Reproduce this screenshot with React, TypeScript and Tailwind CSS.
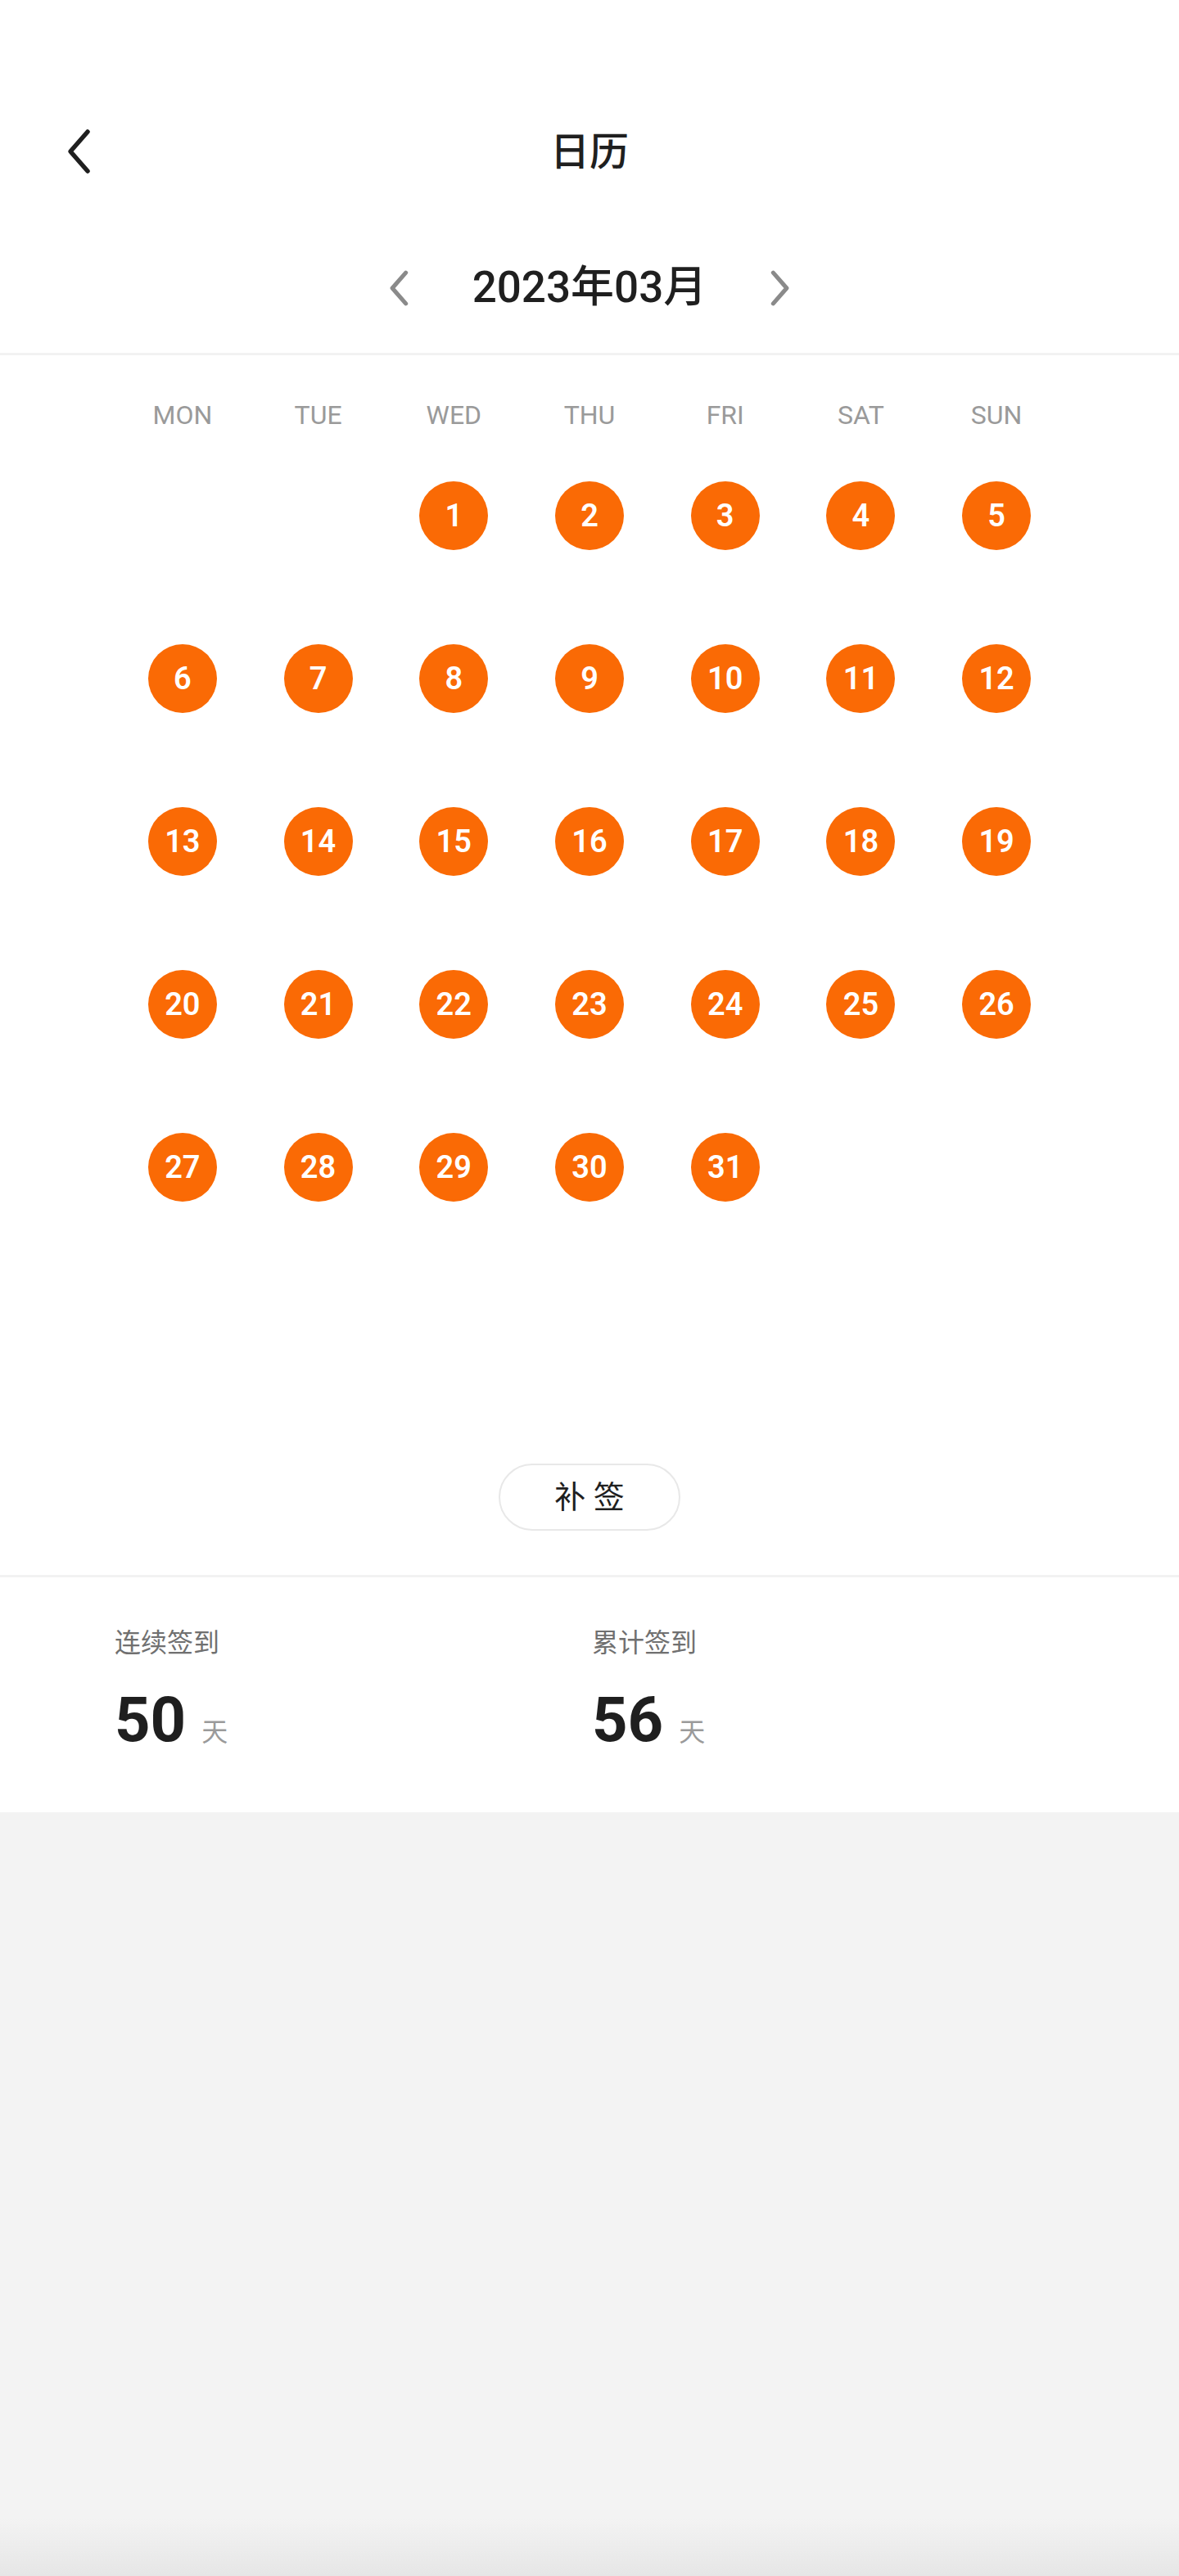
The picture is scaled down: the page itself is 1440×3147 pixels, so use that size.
import React from 'react';

const ORANGE = 'bg-[#fa6a05]';

const weekDays = ['MON', 'TUE', 'WED', 'THU', 'FRI', 'SAT', 'SUN'];

// March 2023 starts on a Wednesday
const leading = 2;
const days = Array.from({ length: 31 }, (_, i) => i + 1);

const Chevron: React.FC<{ dir: 'left' | 'right'; className?: string; color: string; width?: number }> = ({
  dir,
  className,
  color,
  width = 5,
}) => (
  <svg viewBox="0 0 32 56" className={className} fill="none">
    <path
      d={dir === 'left' ? 'M27 4 L6 28 L27 52' : 'M5 4 L26 28 L5 52'}
      stroke={color}
      strokeWidth={width}
      strokeLinecap="round"
      strokeLinejoin="round"
    />
  </svg>
);

const App: React.FC = () => {
  return (
    <div
      className="flex h-[3147px] flex-col bg-[#f3f3f3]"
      style={{ fontFamily: 'Roboto, "Noto Sans CJK SC", sans-serif' }}
    >
      <div className="bg-white pt-[122px]">
        {/* Header */}
        <div className="relative flex h-[128px] items-center justify-center">
          <button className="absolute left-[80px] top-[35px]">
            <Chevron dir="left" color="#1f1f1f" width={5.5} className="h-[56px] w-[32px]" />
          </button>
          <h1 className="text-[48px] font-medium text-[#1f1f1f]">日历</h1>
        </div>

        {/* Month switch */}
        <div className="mt-[22px] flex h-[162px] items-center justify-center gap-[76px] border-b-[3px] border-[#f2f2f2]">
          <Chevron dir="left" color="#8a8a8a" width={6.5} className="h-[44px] w-[28px]" />
          <span className="text-[53px] font-medium text-[#1f1f1f]">2023年03月</span>
          <Chevron dir="right" color="#8a8a8a" width={6.5} className="h-[44px] w-[28px]" />
        </div>

        {/* Calendar */}
        <div className="px-[140px] pt-[53px]">
          <div className="grid grid-cols-7">
            {weekDays.map((d) => (
              <div key={d} className="flex h-[40px] items-center justify-center text-[32px] text-[#9a9a9a]">
                {d}
              </div>
            ))}
          </div>
          <div className="mt-[61px] grid grid-cols-7 gap-y-[115px]">
            {Array.from({ length: leading }).map((_, i) => (
              <div key={`e${i}`} />
            ))}
            {days.map((d) => (
              <div key={d} className="flex justify-center">
                <div
                  className={`flex h-[84px] w-[84px] items-center justify-center rounded-full ${ORANGE} text-[38px] font-semibold text-white`}
                >
                  {d}
                </div>
              </div>
            ))}
          </div>
        </div>

        <div className="mt-[320px] flex justify-center">
          <button className="flex h-[82px] w-[222px] items-center justify-center rounded-full border-2 border-[#e8e8e8] text-[38px] text-[#1f1f1f]">
            补 签
          </button>
        </div>

        <div className="mt-[54px] border-b-[3px] border-[#f2f2f2]" />

        {/* Stats */}
        <div className="grid grid-cols-2 pb-[74px] pt-[58px]">
          <div className="pl-[140px]">
            <div className="text-[32px] leading-[44px] text-[#707070]">连续签到</div>
            <div className="mt-[34px] flex items-baseline gap-[19px]">
              <span className="text-[76px] font-bold leading-none text-[#1f1f1f]">50</span>
              <span className="text-[32px] text-[#9a9a9a]">天</span>
            </div>
          </div>
          <div className="pl-[3px]">
            <div className="text-[32px] leading-[44px] text-[#707070]">累计签到</div>
            <div className="mt-[34px] flex items-baseline gap-[19px]">
              <span className="text-[76px] font-bold leading-none text-[#1f1f1f]">56</span>
              <span className="text-[32px] text-[#9a9a9a]">天</span>
            </div>
          </div>
        </div>
      </div>

      <div className="flex flex-1 flex-col justify-end">
        <div className="h-[70px] bg-gradient-to-b from-[#f3f3f3] to-[#e6e6e6]" />
      </div>
    </div>
  );
};

export default App;
